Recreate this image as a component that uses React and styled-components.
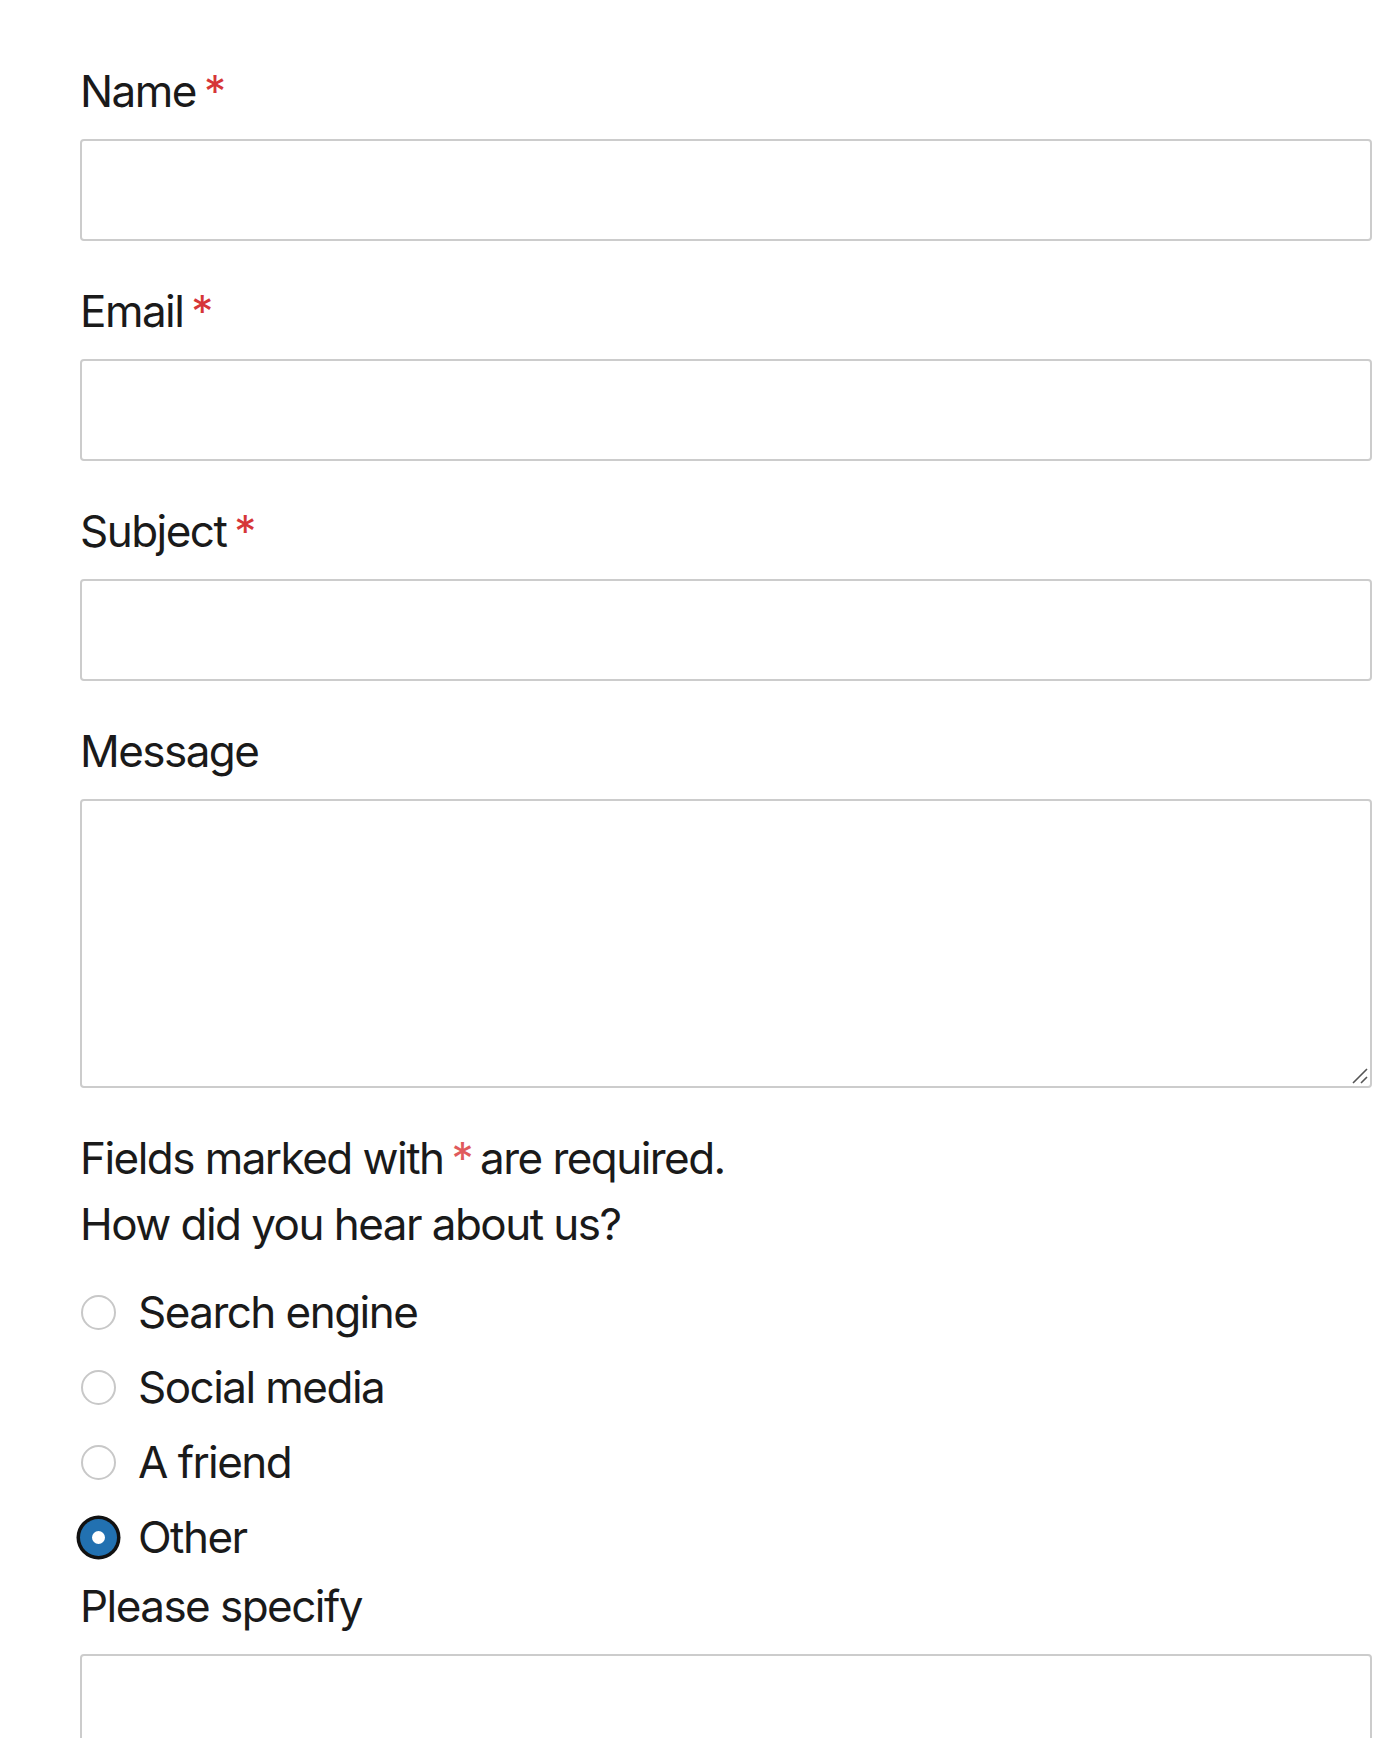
import React from 'react'
import styled, { createGlobalStyle } from 'styled-components'

const GlobalStyle = createGlobalStyle`
  html, body {
    margin: 0;
    padding: 0;
    background: #fff;
  }
  body {
    font-family: Inter, "Noto Sans", sans-serif;
    color: #1a1a1a;
  }
`

const Form = styled.form`
  padding: 58px 23px 0 80px;
  font-size: 44px;
  line-height: 66px;
  letter-spacing: -0.035em;
`

const Field = styled.div`
  display: flex;
  flex-direction: column;
  margin-bottom: 37px;
`

const Label = styled.label`
  display: block;
  margin-bottom: 15px;
`

const Req = styled.span`
  color: ${p => (p.$soft ? '#e05a5c' : '#d63638')};
  margin-left: 8px;
  margin-right: ${p => (p.$soft ? '8px' : '0')};
`

const TextInput = styled.input`
  box-sizing: border-box;
  width: 100%;
  height: 102px;
  border: 2px solid #cccccc;
  border-radius: 4px;
  background: #fff;
  font: inherit;
  padding: 0 20px;
`

const AreaWrap = styled.div`
  position: relative;
`

const TextArea = styled.textarea`
  box-sizing: border-box;
  display: block;
  width: 100%;
  height: 289px;
  border: 2px solid #cccccc;
  border-radius: 4px;
  background: #fff;
  font: inherit;
  padding: 12px 20px;
  resize: none;
`

const Grip = styled.svg`
  position: absolute;
  right: 4px;
  bottom: 4px;
  width: 16px;
  height: 16px;
  pointer-events: none;
`

const Note = styled.p`
  margin: 0;
`

const Group = styled.fieldset`
  border: 0;
  margin: 0;
  padding: 0;
  min-width: 0;
`

const Legend = styled.legend`
  padding: 0;
  margin-bottom: 22px;
`

const Options = styled.div`
  display: flex;
  flex-direction: column;
  gap: 9px;
  margin-bottom: 3px;
`

const Option = styled.label`
  display: flex;
  align-items: center;
  gap: 22px;
  height: 66px;
`

const Radio = styled.input`
  appearance: none;
  -webkit-appearance: none;
  box-sizing: border-box;
  flex: none;
  width: 35px;
  height: 35px;
  margin: 0 0 0 1px;
  border-radius: 50%;
  border: 2px solid #c8c8c8;
  background: #fff;

  &:checked {
    border: 11.5px solid #2271b1;
    box-shadow: 0 0 0 1px #2271b1, 0 0 0 4.5px #111;
  }
`

const options = ['Search engine', 'Social media', 'A friend', 'Other']

export default function App() {
  return (
    <>
      <GlobalStyle />
      <Form onSubmit={e => e.preventDefault()}>
        <Field>
          <Label htmlFor="name">Name<Req>*</Req></Label>
          <TextInput id="name" type="text" />
        </Field>
        <Field>
          <Label htmlFor="email">Email<Req>*</Req></Label>
          <TextInput id="email" type="email" />
        </Field>
        <Field>
          <Label htmlFor="subject">Subject<Req>*</Req></Label>
          <TextInput id="subject" type="text" />
        </Field>
        <Field>
          <Label htmlFor="message">Message</Label>
          <AreaWrap>
            <TextArea id="message" />
            <Grip viewBox="0 0 16 16">
              <path d="M1 15 L15 1 M9 15 L15 9" stroke="#555" strokeWidth="1.6" fill="none" />
            </Grip>
          </AreaWrap>
        </Field>
        <Note>Fields marked with<Req $soft>*</Req>are required.</Note>
        <Group>
          <Legend>How did you hear about us?</Legend>
          <Options>
            {options.map(o => (
              <Option key={o}>
                <Radio type="radio" name="source" value={o} defaultChecked={o === 'Other'} />
                {o}
              </Option>
            ))}
          </Options>
          <Label htmlFor="other">Please specify</Label>
          <TextInput id="other" type="text" />
        </Group>
      </Form>
    </>
  )
}
